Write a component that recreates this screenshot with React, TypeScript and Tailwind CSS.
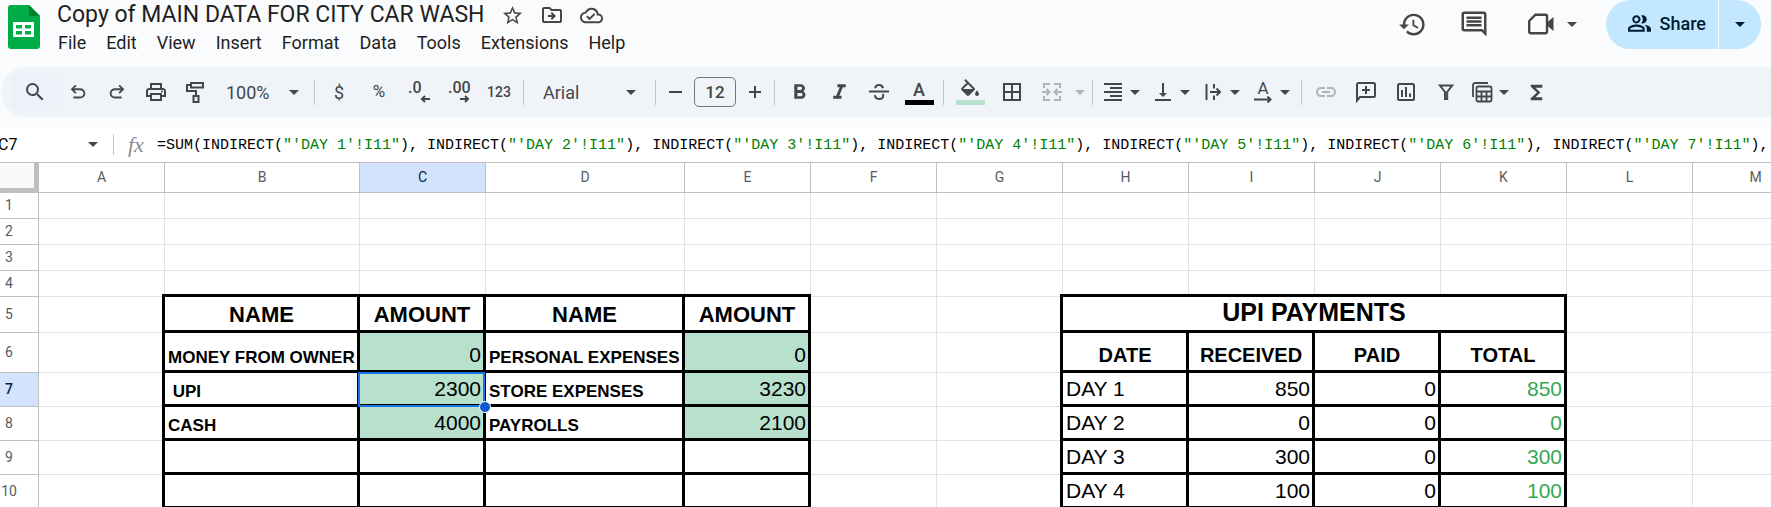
import type { ReactNode } from "react";
import {
  MdBorderAll,
  MdFormatAlignRight,
  MdFormatBold,
  MdFormatItalic,
  MdFunctions,
  MdHistory,
  MdLink,
  MdOutlineCloudDone,
  MdOutlineComment,
  MdOutlineDriveFileMove,
  MdOutlinePeopleAlt,
  MdOutlinePrint,
  MdSearch,
  MdStarBorder,
  MdVerticalAlignBottom,
} from "react-icons/md";

function Glyph({ children, size = 24, width = 2 }: { children: ReactNode; size?: number; width?: number }) {
  return (
    <svg
      width={size}
      height={size}
      viewBox="0 0 24 24"
      fill="none"
      stroke="currentColor"
      strokeWidth={width}
      aria-hidden="true"
      className="shrink-0"
    >
      {children}
    </svg>
  );
}

function Caret() {
  return (
    <svg width="10" height="5" viewBox="0 0 10 5" fill="currentColor" aria-hidden="true" className="shrink-0">
      <path d="M0 0h10L5 5z" />
    </svg>
  );
}

function SheetsLogo() {
  return (
    <svg width="32" height="44" viewBox="0 0 32 44" aria-hidden="true">
      <path d="M3 0h18l11 11v30a3 3 0 0 1-3 3H3a3 3 0 0 1-3-3V3a3 3 0 0 1 3-3z" fill="#00ac47" />
      <path d="M21 0l11 11H21z" fill="#00832d" />
      <path d="M5 17h21v15H5zM8 20v3.5h6V20zm9 0v3.5h6V20zM8 26v3.5h6V26zm9 0v3.5h6V26z" fill="#fff" fillRule="evenodd" />
    </svg>
  );
}

const undoPath =
  "M7 19v-2h7.1q1.575 0 2.738-1T18 13.5 16.838 11 14.1 10H7.8l2.6 2.6L9 14 4 9l5-5 1.4 1.4L7.8 8h6.3q2.425 0 4.163 1.575T20 13.5t-1.737 3.925T14.1 19z";

function Tool({ label, children, className = "w-10" }: { label: string; children: ReactNode; className?: string }) {
  return (
    <button type="button" aria-label={label} className={`flex h-9 shrink-0 items-center justify-center rounded ${className}`}>
      {children}
    </button>
  );
}

function Combo({ label, children }: { label: string; children: ReactNode }) {
  return (
    <button type="button" aria-label={label} className="flex h-9 w-[50px] shrink-0 items-center gap-[5px] pl-1">
      {children}
      <Caret />
    </button>
  );
}

function Divider() {
  return <span className="mx-1 h-[25px] w-px shrink-0 bg-[#c7c7c7]" />;
}

function Header() {
  const menus = ["File", "Edit", "View", "Insert", "Format", "Data", "Tools", "Extensions", "Help"];
  return (
    <header className="flex h-[67px] shrink-0 items-start pl-2 pr-[10px]">
      <a href="#home" aria-label="Sheets home" className="mt-[5px]">
        <SheetsLogo />
      </a>
      <div className="ml-2 flex flex-col">
        <div className="flex h-[29px] items-end pl-[9px]">
          <h1 className="whitespace-nowrap text-[23px] leading-7 text-[#1f1f1f]">Copy of MAIN DATA FOR CITY CAR WASH</h1>
          <div className="ml-[17px] flex h-7 items-center gap-4 text-[#444746]">
            <button type="button" aria-label="Star">
              <MdStarBorder size={23} />
            </button>
            <button type="button" aria-label="Move">
              <MdOutlineDriveFileMove size={24} />
            </button>
            <button type="button" aria-label="Document status">
              <MdOutlineCloudDone size={23} />
            </button>
          </div>
        </div>
        <nav className="flex h-7 items-center text-[18px] leading-6 text-[#1f1f1f]">
          {menus.map((m) => (
            <button type="button" key={m} className="px-[10px]">
              {m}
            </button>
          ))}
        </nav>
      </div>
      <div className="ml-auto flex items-start text-[#444746]">
        <div className="flex h-12 items-center">
          <button type="button" aria-label="Version history" className="mr-8">
            <MdHistory size={29} />
          </button>
          <button type="button" aria-label="Comments" className="mr-9">
            <MdOutlineComment size={30} />
          </button>
          <button type="button" aria-label="Join a call" className="mr-[29px] flex items-center gap-3">
            <svg width="30" height="30" viewBox="0 0 30 30" fill="none" aria-hidden="true">
              <path d="M4.2 12L10.500 5.700h10a1.500 1.500 0 0 1 1.500 1.500v15.600a1.500 1.500 0 0 1-1.500 1.500H5.700a1.500 1.500 0 0 1-1.500-1.500z" stroke="currentColor" strokeWidth="2.4" strokeLinejoin="round" />
              <path d="M22 13.500l6.500-5.500v14L22 16.500z" fill="currentColor" />
            </svg>
            <Caret />
          </button>
        </div>
        <div className="flex h-[49px] overflow-hidden rounded-full text-[#001d35]">
          <button type="button" className="flex items-center gap-2 bg-[#c2e7ff] pb-[3px] pl-[21px] pr-3 text-[18px] font-medium">
            <MdOutlinePeopleAlt size={25} />
            Share
          </button>
          <button type="button" aria-label="Sharing options" className="ml-px flex w-[42px] items-center justify-center bg-[#c2e7ff]">
            <Caret />
          </button>
        </div>
      </div>
    </header>
  );
}

function Toolbar() {
  return (
    <div className="ml-px flex h-[50px] shrink-0 items-center overflow-hidden rounded-l-full bg-[#f0f4f9] pl-[11px] text-[#444746]">
      <Tool label="Search the menus" className="w-[46px] bg-[#edf2fa]">
        <MdSearch size={24} />
      </Tool>
      <Tool label="Undo" className="w-[39px]">
        <svg width="22" height="22" viewBox="0 0 24 24" fill="currentColor" aria-hidden="true">
          <path d={undoPath} />
        </svg>
      </Tool>
      <Tool label="Redo" className="w-[39px]">
        <svg width="22" height="22" viewBox="0 0 24 24" fill="currentColor" aria-hidden="true" className="-scale-x-100">
          <path d={undoPath} />
        </svg>
      </Tool>
      <Tool label="Print" className="w-[39px]">
        <MdOutlinePrint size={24} />
      </Tool>
      <Tool label="Paint format" className="w-[39px]">
        <Glyph>
          <path d="M8 3h12v4.500H8zM8 5H4v6h9v4.500M10.500 16h5v6h-5z" />
        </Glyph>
      </Tool>
      <button type="button" aria-label="Zoom" className="flex h-9 w-24 shrink-0 items-center justify-between pl-3 pr-[11px] text-[18px]">
        100%
        <Caret />
      </button>
      <Divider />
      <Tool label="Format as currency">
        <span className="text-[18px]">$</span>
      </Tool>
      <Tool label="Format as percent">
        <span className="text-[17px]">%</span>
      </Tool>
      <Tool label="Decrease decimal places">
        <span className="flex w-[22px] flex-col">
          <span className="text-left text-[16px] font-medium leading-[14px]">.0</span>
          <svg width="10" height="8" viewBox="0 0 10 8" fill="none" stroke="currentColor" strokeWidth="2" className="self-end">
            <path d="M10 4H2M5 1L2 4l3 3" />
          </svg>
        </span>
      </Tool>
      <Tool label="Increase decimal places">
        <span className="flex w-[22px] flex-col">
          <span className="text-left text-[16px] font-medium leading-[14px]">.00</span>
          <svg width="10" height="8" viewBox="0 0 10 8" fill="none" stroke="currentColor" strokeWidth="2" className="self-end">
            <path d="M0 4h8M5 1l3 3-3 3" />
          </svg>
        </span>
      </Tool>
      <Tool label="More formats">
        <span className="text-[14px] font-medium">123</span>
      </Tool>
      <Divider />
      <button type="button" aria-label="Font" className="flex h-9 w-[123px] shrink-0 items-center justify-between px-[15px] text-[18px]">
        Arial
        <Caret />
      </button>
      <Divider />
      <Tool label="Decrease font size" className="w-[30px]">
        <Glyph>
          <path d="M6 12h13" />
        </Glyph>
      </Tool>
      <input
        aria-label="Font size"
        defaultValue="12"
        className="mx-1 h-[30px] w-[42px] shrink-0 rounded-[5px] border border-[#747775] bg-transparent text-center text-[17px] font-medium outline-none"
      />
      <Tool label="Increase font size" className="w-[30px]">
        <Glyph>
          <path d="M6 12h12M12 6v12" />
        </Glyph>
      </Tool>
      <Divider />
      <Tool label="Bold">
        <MdFormatBold size={25} />
      </Tool>
      <Tool label="Italic">
        <MdFormatItalic size={25} />
      </Tool>
      <Tool label="Strikethrough">
        <Glyph>
          <path d="M2 11.500h20M8 8.300C8.500 6.200 10 5.100 12 5.100s3.600 1 4.100 3.200M7.800 15.200c.3 2.400 2 3.700 4.200 3.700s4.200-1.200 4.200-3.200c0-.6-.1-1.100-.4-1.600" />
        </Glyph>
      </Tool>
      <Tool label="Text colour">
        <span className="flex flex-col items-center gap-px pt-[2px]">
          <span className="text-[18px] font-medium leading-[18px]">A</span>
          <span className="h-[5px] w-[29px] bg-black" />
        </span>
      </Tool>
      <Divider />
      <Tool label="Fill colour" className="w-11">
        <span className="flex flex-col items-center gap-[3px]">
          <svg width="24" height="18" viewBox="0 0 24 18" fill="currentColor" aria-hidden="true">
            <path d="M16.560 8.940L7.620 0 6.210 1.410l2.380 2.380-5.150 5.150a1.490 1.490 0 0 0 0 2.120l5.500 5.500c.29.29.68.44 1.060.44s.77-.15 1.060-.44l5.500-5.500c.59-.58.59-1.530 0-2.120zM5.210 10L10 5.210 14.790 10zM19 11.500s-2 2.170-2 3.500c0 1.100.9 2 2 2s2-.9 2-2c0-1.330-2-3.500-2-3.500z" />
          </svg>
          <span className="h-[5px] w-[29px] bg-[#b7e1cd]" />
        </span>
      </Tool>
      <Tool label="Borders">
        <MdBorderAll size={24} />
      </Tool>
      <Tool label="Merge cells">
        <span className="text-[#b2b5b8]">
          <Glyph>
            <path d="M10 4H4v4M4 16v4h6M14 4h6v4M20 16v4h-6M2 12h7M6.500 9l3 3-3 3M22 12h-7M17.500 9l-3 3 3 3" />
          </Glyph>
        </span>
      </Tool>
      <Tool label="Merge options" className="w-4">
        <span className="text-[#b2b5b8]">
          <Caret />
        </span>
      </Tool>
      <Divider />
      <Combo label="Horizontal align">
        <MdFormatAlignRight size={24} />
      </Combo>
      <Combo label="Vertical align">
        <MdVerticalAlignBottom size={24} />
      </Combo>
      <Combo label="Text wrapping">
        <Glyph>
          <path d="M5.500 4v16M13 4v4.500M13 15.500V20M9 12h10M15.500 8.500L19 12l-3.500 3.500" />
        </Glyph>
      </Combo>
      <Combo label="Text rotation">
        <span className="flex w-6 flex-col items-center">
          <span className="text-[17px] leading-[15px]">A</span>
          <svg width="18" height="7" viewBox="0 0 18 7" fill="none" stroke="currentColor" strokeWidth="2">
            <path d="M0 3.500h16M13.500 .5l3 3-3 3" />
          </svg>
        </span>
      </Combo>
      <Divider />
      <Tool label="Insert link">
        <MdLink size={24} className="text-[#b2b5b8]" />
      </Tool>
      <Tool label="Insert comment">
        <Glyph>
          <path d="M3 20.500V4.500A1.500 1.500 0 0 1 4.500 3h15A1.500 1.500 0 0 1 21 4.500v11a1.500 1.500 0 0 1-1.500 1.500H6zM12 6v8M8 10h8" />
        </Glyph>
      </Tool>
      <Tool label="Insert chart">
        <Glyph>
          <rect x="4" y="4" width="16" height="16" rx="1.500" />
          <path d="M8 10v7M12 7v10M16 13.500V17" />
        </Glyph>
      </Tool>
      <Tool label="Create a filter">
        <Glyph>
          <path d="M6 5.500h12.200L13.200 12v7h-2.200v-7z" />
        </Glyph>
      </Tool>
      <Combo label="Filter views">
        <Glyph width={1.8}>
          <path d="M3 17V5a2 2 0 0 1 2-2h13" />
          <rect x="6.500" y="6.500" width="15" height="15" rx="1.500" />
          <path d="M6.500 11.500h15M6.500 16.500h15M11.500 11.500v10M16.500 11.500v10" />
        </Glyph>
      </Combo>
      <Tool label="Functions">
        <MdFunctions size={23} />
      </Tool>
    </div>
  );
}

function FormulaBar() {
  const days = [1, 2, 3, 4, 5, 6, 7];
  return (
    <div className="mt-[10px] flex h-9 shrink-0 items-center overflow-hidden border-b border-[#c0c0c0] bg-white">
      <input aria-label="Name box" defaultValue="C7" className="-ml-0.5 w-[90px] shrink-0 bg-transparent text-[16px] leading-5 text-black outline-none" />
      <button type="button" aria-label="Named ranges" className="shrink-0 text-[#444746]">
        <Caret />
      </button>
      <span className="ml-[15px] h-[21px] w-px shrink-0 bg-[#c7c7c7]" />
      <span className="ml-[14px] w-[29px] shrink-0 font-['Liberation_Serif',serif] text-[22px] italic leading-6 text-[#8a8d91]">fx</span>
      <div
        role="textbox"
        aria-label="Formula"
        className="whitespace-pre pt-0.5 font-['Liberation_Mono',monospace] text-[15px] leading-5 text-black"
      >
        =SUM(
        {days.map((d, i) => (
          <span key={d}>
            INDIRECT(<span className="text-[#008000]">{`"'DAY ${d}'!I11"`}</span>
            {i < days.length - 1 ? "), " : "),"}
          </span>
        ))}
      </div>
    </div>
  );
}

const letters = ["A", "B", "C", "D", "E", "F", "G", "H", "I", "J", "K", "L", "M"];
const colWidths: Record<string, string> = { B: "w-[195px]", D: "w-[199px]" };

const rowHeights = [
  "h-[26px]",
  "h-[26px]",
  "h-[26px]",
  "h-[26px]",
  "h-9",
  "h-10",
  "h-[34px]",
  "h-[34px]",
  "h-[34px]",
  "h-[34px]",
];

const title = "text-center font-bold text-[22px] leading-6";
const banner = "text-center font-bold text-[25px] leading-[30px]";
const head = "text-center font-bold text-[20px] leading-6";
const label = "font-bold text-[17px] leading-[18px]";
const num = "text-right text-[21px] leading-6";
const filled = "text-right text-[21px] leading-6 bg-[#b7e1cd]";
const day = "text-[21px] leading-6";
const total = "text-right text-[21px] leading-6 text-[#34a853]";

type Cell = [string, string];

const cells: Record<string, Cell> = {
  B5: ["NAME", title],
  C5: ["AMOUNT", title],
  D5: ["NAME", title],
  E5: ["AMOUNT", title],
  H5: ["UPI PAYMENTS", banner],
  B6: ["MONEY FROM OWNER", label],
  C6: ["0", filled],
  D6: ["PERSONAL EXPENSES", label],
  E6: ["0", filled],
  H6: ["DATE", head],
  I6: ["RECEIVED", head],
  J6: ["PAID", head],
  K6: ["TOTAL", head],
  B7: [" UPI", label],
  C7: ["2300", filled],
  D7: ["STORE EXPENSES", label],
  E7: ["3230", filled],
  H7: ["DAY 1", day],
  I7: ["850", num],
  J7: ["0", num],
  K7: ["850", total],
  B8: ["CASH", label],
  C8: ["4000", filled],
  D8: ["PAYROLLS", label],
  E8: ["2100", filled],
  H8: ["DAY 2", day],
  I8: ["0", num],
  J8: ["0", num],
  K8: ["0", total],
  H9: ["DAY 3", day],
  I9: ["300", num],
  J9: ["0", num],
  K9: ["300", total],
  H10: ["DAY 4", day],
  I10: ["100", num],
  J10: ["0", num],
  K10: ["100", total],
};

const thin = "shadow-[inset_-1px_-1px_0_#e1e1e1]";
const thickBottom = "shadow-[inset_0_-3px_0_#000,inset_-1px_0_0_#e1e1e1]";
const thickRight = "shadow-[inset_-3px_0_0_#000,inset_0_-1px_0_#e1e1e1]";
const thickBoth = "shadow-[inset_-3px_-3px_0_#000]";

function lines(col: string, row: number) {
  const boxed = "BCDEHIJK".includes(col);
  if (row === 4 && boxed) return thickBottom;
  if (row >= 5 && boxed) return thickBoth;
  if (row >= 5 && (col === "A" || col === "G")) return thickRight;
  return thin;
}

function Grid() {
  return (
    <table className="w-px table-fixed border-separate border-spacing-0 bg-white font-['Liberation_Sans',Arial,sans-serif] text-black">
      <colgroup>
        <col className="w-[39px]" />
        {letters.map((l) => (
          <col key={l} className={colWidths[l] ?? "w-[126px]"} />
        ))}
      </colgroup>
      <thead className="font-[Roboto,sans-serif] text-[14px]">
        <tr className="h-[30px]">
          <th aria-label="Select all" className="border-b-[5px] border-r-[5px] border-[#c0c0c0] bg-[#f8f9fa] p-0" />
          {letters.map((l) => (
            <th
              key={l}
              scope="col"
              className={`border-b border-r border-[#c0c0c0] p-0 pb-px font-normal leading-5 ${
                l === "C" ? "bg-[#d3e3fd] text-[#041e49]" : "text-[#575b5f]"
              }`}
            >
              {l}
            </th>
          ))}
        </tr>
      </thead>
      <tbody>
        {rowHeights.map((h, i) => {
          const row = i + 1;
          return (
            <tr key={row} className={h}>
              <th
                scope="row"
                className={`border-b border-r border-[#c0c0c0] p-0 pb-0.5 pr-5 font-[Roboto,sans-serif] text-[14px] leading-5 ${
                  row === 7 ? "bg-[#d3e3fd] font-medium text-[#041e49]" : "font-normal text-[#575b5f]"
                }`}
              >
                {row}
              </th>
              {letters.map((l) => {
                if (row === 5 && "IJK".includes(l)) return null;
                const cell = cells[`${l}${row}`];
                const corner = row === 4 && (l === "A" || l === "G");
                const selected = row === 7 && l === "C";
                return (
                  <td
                    key={l}
                    colSpan={row === 5 && l === "H" ? 4 : 1}
                    className={`whitespace-pre pl-[3px] pr-[5px] pt-0 align-bottom ${row < 5 ? "pb-0" : "pb-[6px]"} ${
                      corner ? "relative" : ""
                    } ${selected ? "relative z-10" : ""} ${lines(l, row)} ${cell ? cell[1] : ""}`}
                  >
                    {cell ? cell[0] : null}
                    {corner && <span className="absolute bottom-0 right-0 size-[3px] bg-black" />}
                    {selected && (
                      <>
                        <span className="absolute -left-0.5 -top-px bottom-0 right-px border-2 border-[#1a73e8]" />
                        <span className="absolute -bottom-1.5 -right-[5px] size-3 rounded-full border border-white bg-[#0b57d0]" />
                      </>
                    )}
                  </td>
                );
              })}
            </tr>
          );
        })}
      </tbody>
    </table>
  );
}

export default function App() {
  return (
    <div className="flex h-screen flex-col overflow-hidden bg-[#f9fbfd] font-[Roboto,sans-serif]">
      <Header />
      <Toolbar />
      <FormulaBar />
      <main className="min-h-0 flex-1 overflow-hidden bg-white">
        <Grid />
      </main>
    </div>
  );
}
